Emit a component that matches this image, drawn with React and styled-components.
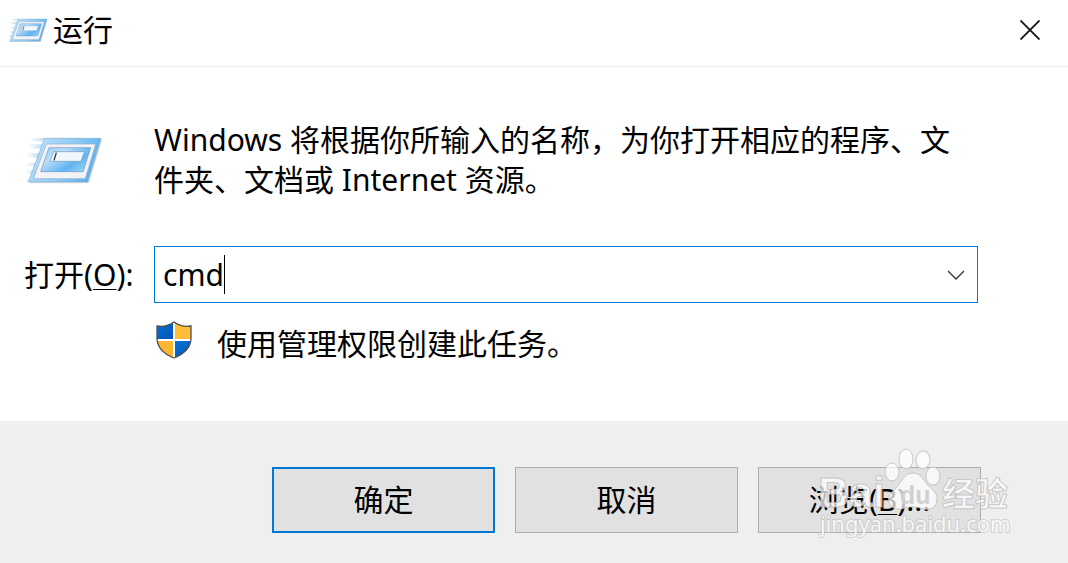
import React, { useState } from "react";
import styled, { createGlobalStyle } from "styled-components";

const GlobalStyle = createGlobalStyle`
  * {
    box-sizing: border-box;
  }
  body {
    margin: 0;
    background: #ffffff;
    color: #000000;
    font-family: "Noto Sans", "Noto Sans CJK SC", sans-serif;
    font-size: 30px;
    line-height: 40px;
  }
  button, input {
    font: inherit;
    color: inherit;
  }
`;

const Dialog = styled.div`
  display: flex;
  flex-direction: column;
  min-height: 100vh;
`;

const TitleBar = styled.header`
  display: flex;
  align-items: center;
  gap: 4px;
  padding: 10px 24px 16px 8px;
  border-bottom: 1px solid #eeeeee;
`;

const Title = styled.h1`
  flex: 1;
  margin: 0;
  font-size: 30px;
  font-weight: 400;
`;

const CloseButton = styled.button`
  display: flex;
  padding: 4px;
  border: none;
  background: none;
`;

const Content = styled.main`
  flex: 1;
  display: grid;
  grid-template-columns: 130px 1fr;
  align-content: start;
  padding: 53px 90px 40px 24px;
`;

const Description = styled.p`
  margin: 0 0 46px;
`;

const IconCell = styled.div`
  padding: 15px 0 0 1px;
`;

const OpenLabel = styled.label`
  align-self: center;
  white-space: nowrap;
`;

const Accel = styled.span`
  text-decoration: underline;
  text-decoration-thickness: 1px;
  text-underline-offset: 3px;
`;

const ComboBox = styled.div`
  display: flex;
  align-items: center;
  height: 57px;
  padding: 0 8px;
  border: 1px solid #0078d7;
`;

const ComboInput = styled.input`
  field-sizing: content;
  max-width: 90%;
  height: 40px;
  padding: 0;
  border: none;
  outline: none;
  background: none;
`;

const Caret = styled.span`
  width: 1px;
  height: 39px;
  background: #000000;
`;

const DropButton = styled.button`
  display: flex;
  margin-left: auto;
  padding: 4px;
  border: none;
  background: none;
`;

const AdminNote = styled.div`
  grid-column: 2;
  display: flex;
  align-items: flex-start;
  gap: 24px;
  padding: 18px 0 0 2px;
`;

const NoteText = styled.span`
  padding-top: 3px;
`;

const Footer = styled.footer`
  position: relative;
  display: flex;
  justify-content: flex-end;
  gap: 20px;
  padding: 46px 87px 30px 24px;
  background: #efefef;
`;

const ActionButton = styled.button`
  width: 223px;
  height: 66px;
  padding: 0;
  border: ${(props) =>
    props.$primary ? "2px solid #0078d7" : "1px solid #adadad"};
  background: #e1e1e1;
`;

const Watermark = styled.svg`
  position: absolute;
  right: 48px;
  bottom: 18px;
  pointer-events: none;
`;

function RunIcon({ id, width, height }) {
  return (
    <svg width={width} height={height} viewBox="45 45 240 150" aria-hidden="true">
      <defs>
        <linearGradient id={`${id}-frame`} x1="0" y1="0" x2="1" y2="0.3">
          <stop offset="0" stopColor="#d3eaf9" />
          <stop offset="0.3" stopColor="#aad7f7" />
          <stop offset="0.65" stopColor="#8ccaf5" />
          <stop offset="1" stopColor="#5db2ee" />
        </linearGradient>
        <linearGradient id={`${id}-screen`} x1="0" y1="0" x2="1" y2="0.7">
          <stop offset="0" stopColor="#91ccf5" />
          <stop offset="0.35" stopColor="#b9dff8" />
          <stop offset="0.75" stopColor="#5fb5f0" />
          <stop offset="1" stopColor="#8fd0f7" />
        </linearGradient>
        <linearGradient id={`${id}-trail`} x1="0" y1="0" x2="1" y2="0">
          <stop offset="0" stopColor="#c5e3f5" stopOpacity="0" />
          <stop offset="1" stopColor="#b5daf2" />
        </linearGradient>
      </defs>
      <g fill={`url(#${id}-trail)`}>
        <path d="M62 54h44l-3 10H58z" />
        <path d="M52 73h48l-4 13H52z" />
        <path d="M50 99h42l-4 14H48z" />
        <path d="M48 128h35l-4 11H48z" />
        <path d="M46 151h30l-3 10H46z" />
        <path d="M45 177h20l-3 9H45z" />
      </g>
      <path d="M108 59H277L237 190H59z" fill="#000" opacity="0.13" />
      <path
        d="M104 55H273L233 186H55z"
        fill={`url(#${id}-frame)`}
        stroke="#83abd0"
        strokeWidth="2"
        strokeLinejoin="round"
      />
      <path d="M109 72H257L226 176H70z" fill="#f3f3f5" stroke="#8eacd0" strokeWidth="2" />
      <path
        d="M117 83H242L219 155H92z"
        fill={`url(#${id}-screen)`}
        stroke="#698fc5"
        strokeWidth="2"
      />
      <path d="M131 95H223L213 124H120z" fill="#f0f8fe" stroke="#7796bd" strokeWidth="2" />
      <path d="M139 98L132 121" stroke="#333" strokeWidth="4" />
    </svg>
  );
}

function ShieldIcon() {
  return (
    <svg width="37" height="38" viewBox="0 0 37 38" aria-hidden="true">
      <defs>
        <clipPath id="shield-clip">
          <path d="M18 1C14 4 8 6 1 5V17C1 27 8 33 18 37 28 33 35 27 35 17V5C28 6 22 4 18 1z" />
        </clipPath>
        <linearGradient id="shield-blue" x1="0" y1="0" x2="1" y2="1">
          <stop offset="0" stopColor="#0875d4" />
          <stop offset="1" stopColor="#0054b5" />
        </linearGradient>
      </defs>
      <g clipPath="url(#shield-clip)">
        <path fill="#fff" d="M0 0h37v38H0z" />
        <path fill="url(#shield-blue)" d="M0 0h17v18H0z" />
        <path fill="#ffbd38" d="M19 0h18v18H19z" />
        <path fill="#fdb632" d="M0 20h17v18H0z" />
        <path fill="url(#shield-blue)" d="M19 20h18v18H19z" />
      </g>
      <path
        d="M18 1C14 4 8 6 1 5V17C1 27 8 33 18 37 28 33 35 27 35 17V5C28 6 22 4 18 1z"
        fill="none"
        stroke="#4c4e50"
        strokeWidth="1.3"
      />
    </svg>
  );
}

function BaiduMark() {
  return (
    <Watermark width="202" height="98" viewBox="0 0 202 98" aria-hidden="true">
      <g
        fill="#ffffff"
        fillOpacity="0.72"
        stroke="#bdbdbd"
        strokeOpacity="0.8"
        strokeWidth="1"
      >
        <text x="0" y="60" fontFamily="Liberation Sans" fontWeight="700" fontSize="43">
          Bai
        </text>
        <ellipse cx="74" cy="25" rx="7" ry="9" />
        <ellipse cx="88" cy="12" rx="7" ry="10" />
        <ellipse cx="105" cy="13" rx="7" ry="9" transform="rotate(8 105 13)" />
        <ellipse cx="115" cy="29" rx="7" ry="9" />
        <path d="M95 26C86 26 84 35 77 42 71 47 70 51 71 55 73 63 81 63 87 61 93 59 98 60 102 61 110 64 118 62 119 53 120 45 113 42 108 36 103 29 101 26 95 26z" />
        <text x="124" y="59" fontFamily="Noto Sans CJK SC" fontWeight="700" fontSize="33">
          经验
        </text>
      </g>
      <text
        x="82"
        y="57"
        fill="#d0d0d0"
        fontFamily="Liberation Sans"
        fontWeight="700"
        fontSize="25"
      >
        du
      </text>
      <text
        x="2"
        y="85"
        fill="#ffffff"
        fillOpacity="0.85"
        stroke="#bdbdbd"
        strokeWidth="2"
        strokeOpacity="0.6"
        paintOrder="stroke"
        fontFamily="Noto Sans"
        fontSize="22"
      >
        jingyan.baidu.com
      </text>
    </Watermark>
  );
}

export default function App() {
  const [command, setCommand] = useState("cmd");

  return (
    <>
      <GlobalStyle />
      <Dialog>
        <TitleBar>
          <RunIcon id="small" width="41" height="26" />
          <Title>运行</Title>
          <CloseButton aria-label="关闭">
            <svg width="20" height="20" viewBox="0 0 20 20">
              <path d="M0.5 0.5L19.5 19.5M19.5 0.5L0.5 19.5" stroke="#111" strokeWidth="1.8" />
            </svg>
          </CloseButton>
        </TitleBar>
        <Content>
          <IconCell>
            <RunIcon id="large" width="80" height="50" />
          </IconCell>
          <Description>
            Windows 将根据你所输入的名称，为你打开相应的程序、文件夹、文档或 Internet 资源。
          </Description>
          <OpenLabel htmlFor="command">
            打开(<Accel>O</Accel>):
          </OpenLabel>
          <ComboBox>
            <ComboInput
              id="command"
              type="text"
              autoComplete="off"
              value={command}
              onChange={(e) => setCommand(e.target.value)}
            />
            <Caret />
            <DropButton aria-label="历史记录">
              <svg width="18" height="10" viewBox="0 0 18 10">
                <path d="M1 1L9 9L17 1" fill="none" stroke="#333" strokeWidth="1.3" />
              </svg>
            </DropButton>
          </ComboBox>
          <AdminNote>
            <ShieldIcon />
            <NoteText>使用管理权限创建此任务。</NoteText>
          </AdminNote>
        </Content>
        <Footer>
          <ActionButton $primary>确定</ActionButton>
          <ActionButton>取消</ActionButton>
          <ActionButton>
            浏览(<Accel>B</Accel>)...
          </ActionButton>
          <BaiduMark />
        </Footer>
      </Dialog>
    </>
  );
}
